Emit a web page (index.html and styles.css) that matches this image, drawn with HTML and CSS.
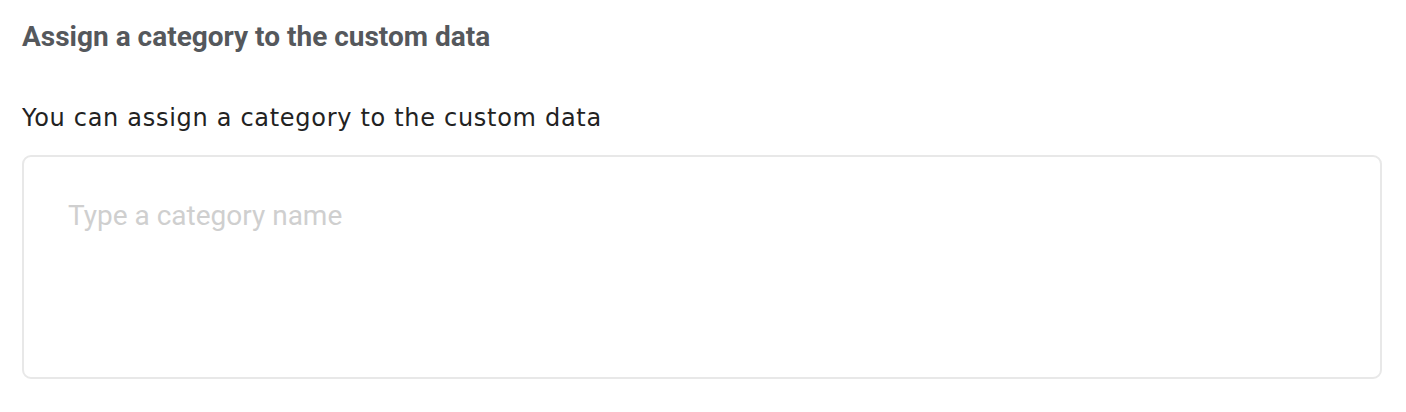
FILE: index.html
```html
<!DOCTYPE html>
<html>
<head>
<meta charset="utf-8">
<link rel="stylesheet" href="styles.css">
</head>
<body>
<div class="page">
  <h2 class="title">Assign a category to the custom data</h2>
  <p class="label">You can assign a category to the custom data</p>
  <textarea class="field" placeholder="Type a category name"></textarea>
</div>
</body>
</html>
```

FILE: styles.css
```css
html, body {
  margin: 0;
  padding: 0;
  background: #ffffff;
}
.page {
  padding: 20px 24px 0 22px;
  display: flex;
  flex-direction: column;
}
.title {
  margin: 0;
  font-family: Roboto, "Liberation Sans", sans-serif;
  font-weight: 700;
  font-size: 28px;
  line-height: 34px;
  color: #55585c;
}
.label {
  margin: 48px 0 0 0;
  font-family: "DejaVu Sans", "Open Sans", sans-serif;
  font-size: 24px;
  line-height: 32px;
  letter-spacing: 0.7px;
  color: #222222;
}
.field {
  margin-top: 21px;
  box-sizing: border-box;
  width: 100%;
  height: 224px;
  border: 2px solid #e8e8e8;
  border-radius: 9px;
  padding: 42px 44px 40px;
  font-family: Roboto, "Liberation Sans", sans-serif;
  font-size: 28px;
  line-height: 33px;
  color: #333;
  resize: none;
  outline: none;
  background: #fff;
}
.field::placeholder {
  color: #cfcfcf;
}
```
